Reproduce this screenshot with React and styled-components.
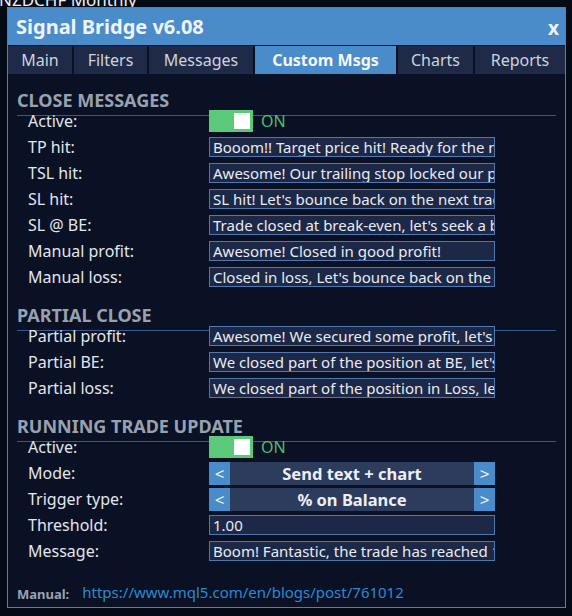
import React from "react";
import styled, { createGlobalStyle } from "styled-components";

const GlobalStyle = createGlobalStyle`
  html, body {
    margin: 0;
    padding: 0;
    background: #050a17;
  }
  body {
    font-family: "Noto Sans", "Open Sans", sans-serif;
    -webkit-font-smoothing: antialiased;
  }
`;

const Desk = styled.div`
  position: relative;
  width: 572px;
  height: 616px;
  overflow: hidden;
  box-sizing: border-box;
  padding: 7px 0 0 7px;
  background: #050a17;
`;

/* symbol caption of the chart sitting under the panel */
const ChartCaption = styled.div`
  position: absolute;
  left: -1px;
  top: -12px;
  font-size: 17px;
  color: #eef0f4;
  white-space: nowrap;
`;

const Panel = styled.div`
  position: relative;
  width: 559px;
  height: 601px;
  box-sizing: border-box;
  border: 1px solid #4a82bf;
  background: #0b1124;
  display: flex;
  flex-direction: column;
`;

const TitleBar = styled.div`
  height: 37px;
  background: #4a8cc9;
  display: flex;
  align-items: center;
  justify-content: space-between;
  padding: 0 6px 0 8px;
  color: #eef3fa;
`;

const Title = styled.div`
  font-size: 20px;
  font-weight: 700;
`;

const Close = styled.div`
  font-size: 19px;
  font-weight: 700;
  margin-top: 2px;
`;

const TabBar = styled.div`
  display: flex;
  gap: 2px;
  padding-top: 1px;
  height: 28px;
`;

const Tab = styled.div`
  width: ${(p) => p.$w}px;
  height: 28px;
  display: flex;
  align-items: center;
  justify-content: center;
  font-size: 16px;
  background: ${(p) => (p.$active ? "#4a8cc9" : "#1e2a47")};
  color: ${(p) => (p.$active ? "#f4f7fb" : "#cdd4de")};
  font-weight: ${(p) => (p.$active ? 700 : 400)};
`;

const Body = styled.div`
  padding: 1px 9px 0 9px;
  display: flex;
  flex-direction: column;
`;

const SectionHead = styled.div`
  padding-top: 15px;
  padding-bottom: 5px;
  height: 20px;
  line-height: 20px;
  font-size: 18px;
  font-weight: 700;
  color: #9aa1ae;
  border-bottom: 1px solid #38578a;
`;

const Rows = styled.div`
  margin-top: -8px;
  display: flex;
  flex-direction: column;
`;

const Row = styled.div`
  height: 26px;
  display: grid;
  grid-template-columns: 181px 286px;
  align-items: center;
  padding-left: 11px;
`;

const Label = styled.div`
  font-size: 16px;
  color: #e2e6ed;
  white-space: nowrap;
`;

const TextBox = styled.div`
  height: 20px;
  box-sizing: border-box;
  border: 1px solid #4f78b0;
  background: #1d2846;
  color: #e8ecf3;
  font-size: 15px;
  line-height: 18px;
  padding-left: 3px;
  white-space: nowrap;
  overflow: hidden;
`;

const ToggleWrap = styled.div`
  display: flex;
  align-items: center;
  gap: 8px;
`;

const Switch = styled.div`
  width: 44px;
  height: 22px;
  background: #5cc879;
  display: flex;
  align-items: center;
  justify-content: flex-end;
  padding-right: 3px;
  box-sizing: border-box;
`;

const Knob = styled.div`
  width: 16px;
  height: 16px;
  background: #ffffff;
`;

const OnText = styled.span`
  font-size: 16px;
  color: #4fbf6b;
`;

const Stepper = styled.div`
  height: 22px;
  display: grid;
  grid-template-columns: 21px 1fr 21px;
`;

const StepBtn = styled.div`
  background: #4a8cc9;
  color: #eef3fa;
  display: flex;
  align-items: center;
  justify-content: center;
  font-size: 17px;
  line-height: 20px;
`;

const StepValue = styled.div`
  background: #2d3b5c;
  color: #eceff5;
  display: flex;
  align-items: center;
  justify-content: center;
  font-size: 16.5px;
  font-weight: 700;
`;

const Footer = styled.div`
  margin-top: 19px;
  display: flex;
  align-items: flex-end;
  gap: 13px;
`;

const FooterTag = styled.span`
  font-size: 13px;
  font-weight: 700;
  color: #9aa1ae;
  line-height: 14px;
`;

const FooterLink = styled.a`
  font-size: 15px;
  color: #2a8ad2;
  text-decoration: none;
  line-height: 18px;
`;

const tabs = [
  { name: "Main", w: 64 },
  { name: "Filters", w: 73 },
  { name: "Messages", w: 104 },
  { name: "Custom Msgs", w: 141, active: true },
  { name: "Charts", w: 75 },
  { name: "Reports", w: 90 },
];

const closeMsgs = [
  ["TP hit:", "Booom!! Target price hit! Ready for the next one!"],
  ["TSL hit:", "Awesome! Our trailing stop locked our profit!"],
  ["SL hit:", "SL hit! Let's bounce back on the next trade!"],
  ["SL @ BE:", "Trade closed at break-even, let's seek a better one!"],
  ["Manual profit:", "Awesome! Closed in good profit!"],
  ["Manual loss:", "Closed in loss, Let's bounce back on the next one!"],
];

const partialMsgs = [
  ["Partial profit:", "Awesome! We secured some profit, let's keep going!"],
  ["Partial BE:", "We closed part of the position at BE, let's see!"],
  ["Partial loss:", "We closed part of the position in Loss, let's see!"],
];

function Toggle() {
  return (
    <ToggleWrap>
      <Switch>
        <Knob />
      </Switch>
      <OnText>ON</OnText>
    </ToggleWrap>
  );
}

function Choice({ value }) {
  return (
    <Stepper>
      <StepBtn>&lt;</StepBtn>
      <StepValue>{value}</StepValue>
      <StepBtn>&gt;</StepBtn>
    </Stepper>
  );
}

function Field({ label, children }) {
  return (
    <Row>
      <Label>{label}</Label>
      {children}
    </Row>
  );
}

export default function App() {
  return (
    <>
      <GlobalStyle />
      <Desk>
        <ChartCaption>NZDCHF Monthly</ChartCaption>
        <Panel>
          <TitleBar>
            <Title>Signal Bridge v6.08</Title>
            <Close>x</Close>
          </TitleBar>
          <TabBar>
            {tabs.map((t) => (
              <Tab key={t.name} $w={t.w} $active={t.active}>
                {t.name}
              </Tab>
            ))}
          </TabBar>
          <Body>
            <SectionHead>CLOSE MESSAGES</SectionHead>
            <Rows>
              <Field label="Active:">
                <Toggle />
              </Field>
              {closeMsgs.map(([l, v]) => (
                <Field key={l} label={l}>
                  <TextBox>{v}</TextBox>
                </Field>
              ))}
            </Rows>

            <SectionHead>PARTIAL CLOSE</SectionHead>
            <Rows>
              {partialMsgs.map(([l, v]) => (
                <Field key={l} label={l}>
                  <TextBox>{v}</TextBox>
                </Field>
              ))}
            </Rows>

            <SectionHead>RUNNING TRADE UPDATE</SectionHead>
            <Rows>
              <Field label="Active:">
                <Toggle />
              </Field>
              <Field label="Mode:">
                <Choice value="Send text + chart" />
              </Field>
              <Field label="Trigger type:">
                <Choice value="% on Balance" />
              </Field>
              <Field label="Threshold:">
                <TextBox>1.00</TextBox>
              </Field>
              <Field label="Message:">
                <TextBox>Boom! Fantastic, the trade has reached 1% on balance!</TextBox>
              </Field>
            </Rows>

            <Footer>
              <FooterTag>Manual:</FooterTag>
              <FooterLink href="#">https://www.mql5.com/en/blogs/post/761012</FooterLink>
            </Footer>
          </Body>
        </Panel>
      </Desk>
    </>
  );
}
